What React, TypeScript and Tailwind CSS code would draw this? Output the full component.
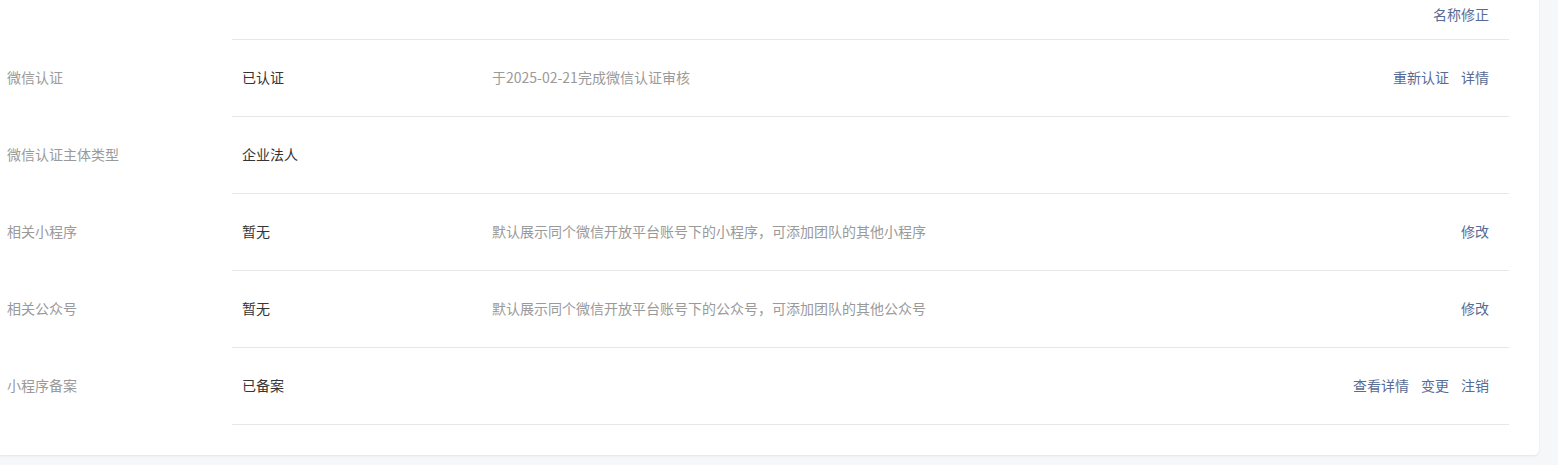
import React from "react";

type Row = {
  label: string;
  value: string;
  desc?: string;
  actions: string[];
};

const rows: Row[] = [
  { label: "微信认证", value: "已认证", desc: "于2025-02-21完成微信认证审核", actions: ["重新认证", "详情"] },
  { label: "微信认证主体类型", value: "企业法人", actions: [] },
  { label: "相关小程序", value: "暂无", desc: "默认展示同个微信开放平台账号下的小程序，可添加团队的其他小程序", actions: ["修改"] },
  { label: "相关公众号", value: "暂无", desc: "默认展示同个微信开放平台账号下的公众号，可添加团队的其他公众号", actions: ["修改"] },
  { label: "小程序备案", value: "已备案", actions: ["查看详情", "变更", "注销"] },
];

export default function App() {
  return (
    <div
      className="w-full h-[465px] bg-[#f6f7f9] overflow-hidden"
      style={{ fontFamily: '"Noto Sans CJK SC", "Noto Sans", sans-serif' }}
    >
      <div className="w-[1539px] h-[455px] bg-white rounded-br-[5px] shadow-[0_1px_2px_rgba(0,0,0,0.08)] flex flex-col text-[14px] leading-[20px]">
        <div className="flex">
          <div className="w-[232px] shrink-0" />
          <div className="flex-1 mr-[30px] h-[40px] border-b border-[#e7e7e7] flex justify-end items-start pt-[4px] pr-[20px]">
            <a className="text-[#576b95] cursor-pointer">名称修正</a>
          </div>
        </div>
        {rows.map((r) => (
          <div key={r.label} className="flex">
            <div className="w-[232px] shrink-0 pl-[7px] flex items-center pb-[3px] text-[#9a9a9a]">
              {r.label}
            </div>
            <div className="flex-1 mr-[30px] h-[77px] border-b border-[#e7e7e7] flex items-center pb-[3px] pr-[20px]">
              <div className="w-[260px] shrink-0 pl-[10px] text-[#353535]">{r.value}</div>
              <div className="flex-1 text-[#9a9a9a]">{r.desc}</div>
              <div className="flex gap-3 text-[#576b95]">
                {r.actions.map((a) => (
                  <a key={a} className="cursor-pointer">
                    {a}
                  </a>
                ))}
              </div>
            </div>
          </div>
        ))}
      </div>
    </div>
  );
}
